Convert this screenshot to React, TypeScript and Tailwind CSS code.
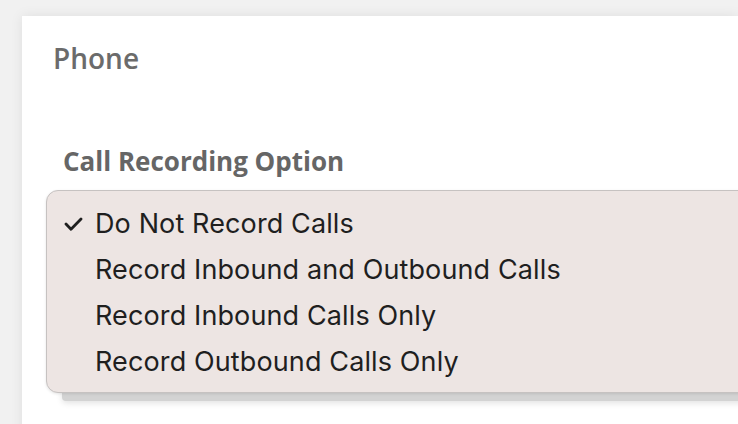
import React from "react";

const items = [
  "Do Not Record Calls",
  "Record Inbound and Outbound Calls",
  "Record Inbound Calls Only",
  "Record Outbound Calls Only",
];

export default function App() {
  return (
    <div className="w-[738px] h-[424px] overflow-hidden bg-[#f1f1f1] pt-[16px] pl-[22px]">
      <div className="h-[500px] bg-white shadow-[0_0_12px_rgba(0,0,0,0.08)] pt-[28px] pl-[31px] font-['Open_Sans',sans-serif]">
        <div className="text-[28px] leading-[28px] font-semibold text-[#6b6b6b]">Phone</div>
        <div className="mt-[75px] ml-[10px] text-[26px] leading-[28px] font-bold text-[#666666]">
          Call Recording Option
        </div>
        <div className="relative mt-[15px] -ml-[7px] w-[760px]">
          <div className="absolute left-[16px] right-0 top-[20px] bottom-[-8px] bg-[#d3d3d3] rounded-b-[4px] shadow-[0_2px_6px_rgba(0,0,0,0.12)]" />
          <div className="relative bg-[#ede5e3] border border-[#c6c2c1] rounded-[12px] pt-[10px] pb-[7px] font-['Inter',sans-serif] text-[27px] tracking-[0.12px] text-[#1f1f1f] shadow-[0_1px_3px_rgba(0,0,0,0.1)]">
            {items.map((t, i) => (
              <div key={t} className="h-[46px] leading-[46px] flex items-center">
                <div className="w-[48px] flex justify-end pr-[12px]">
                  {i === 0 && (
                    <svg width="19" height="14" viewBox="0 0 19 14">
                      <path d="M2 7 L7 12.2 L17 2" fill="none" stroke="#1f1f1f" strokeWidth="2.8" strokeLinecap="round" strokeLinejoin="round" />
                    </svg>
                  )}
                </div>
                <span>{t}</span>
              </div>
            ))}
          </div>
        </div>
      </div>
    </div>
  );
}
